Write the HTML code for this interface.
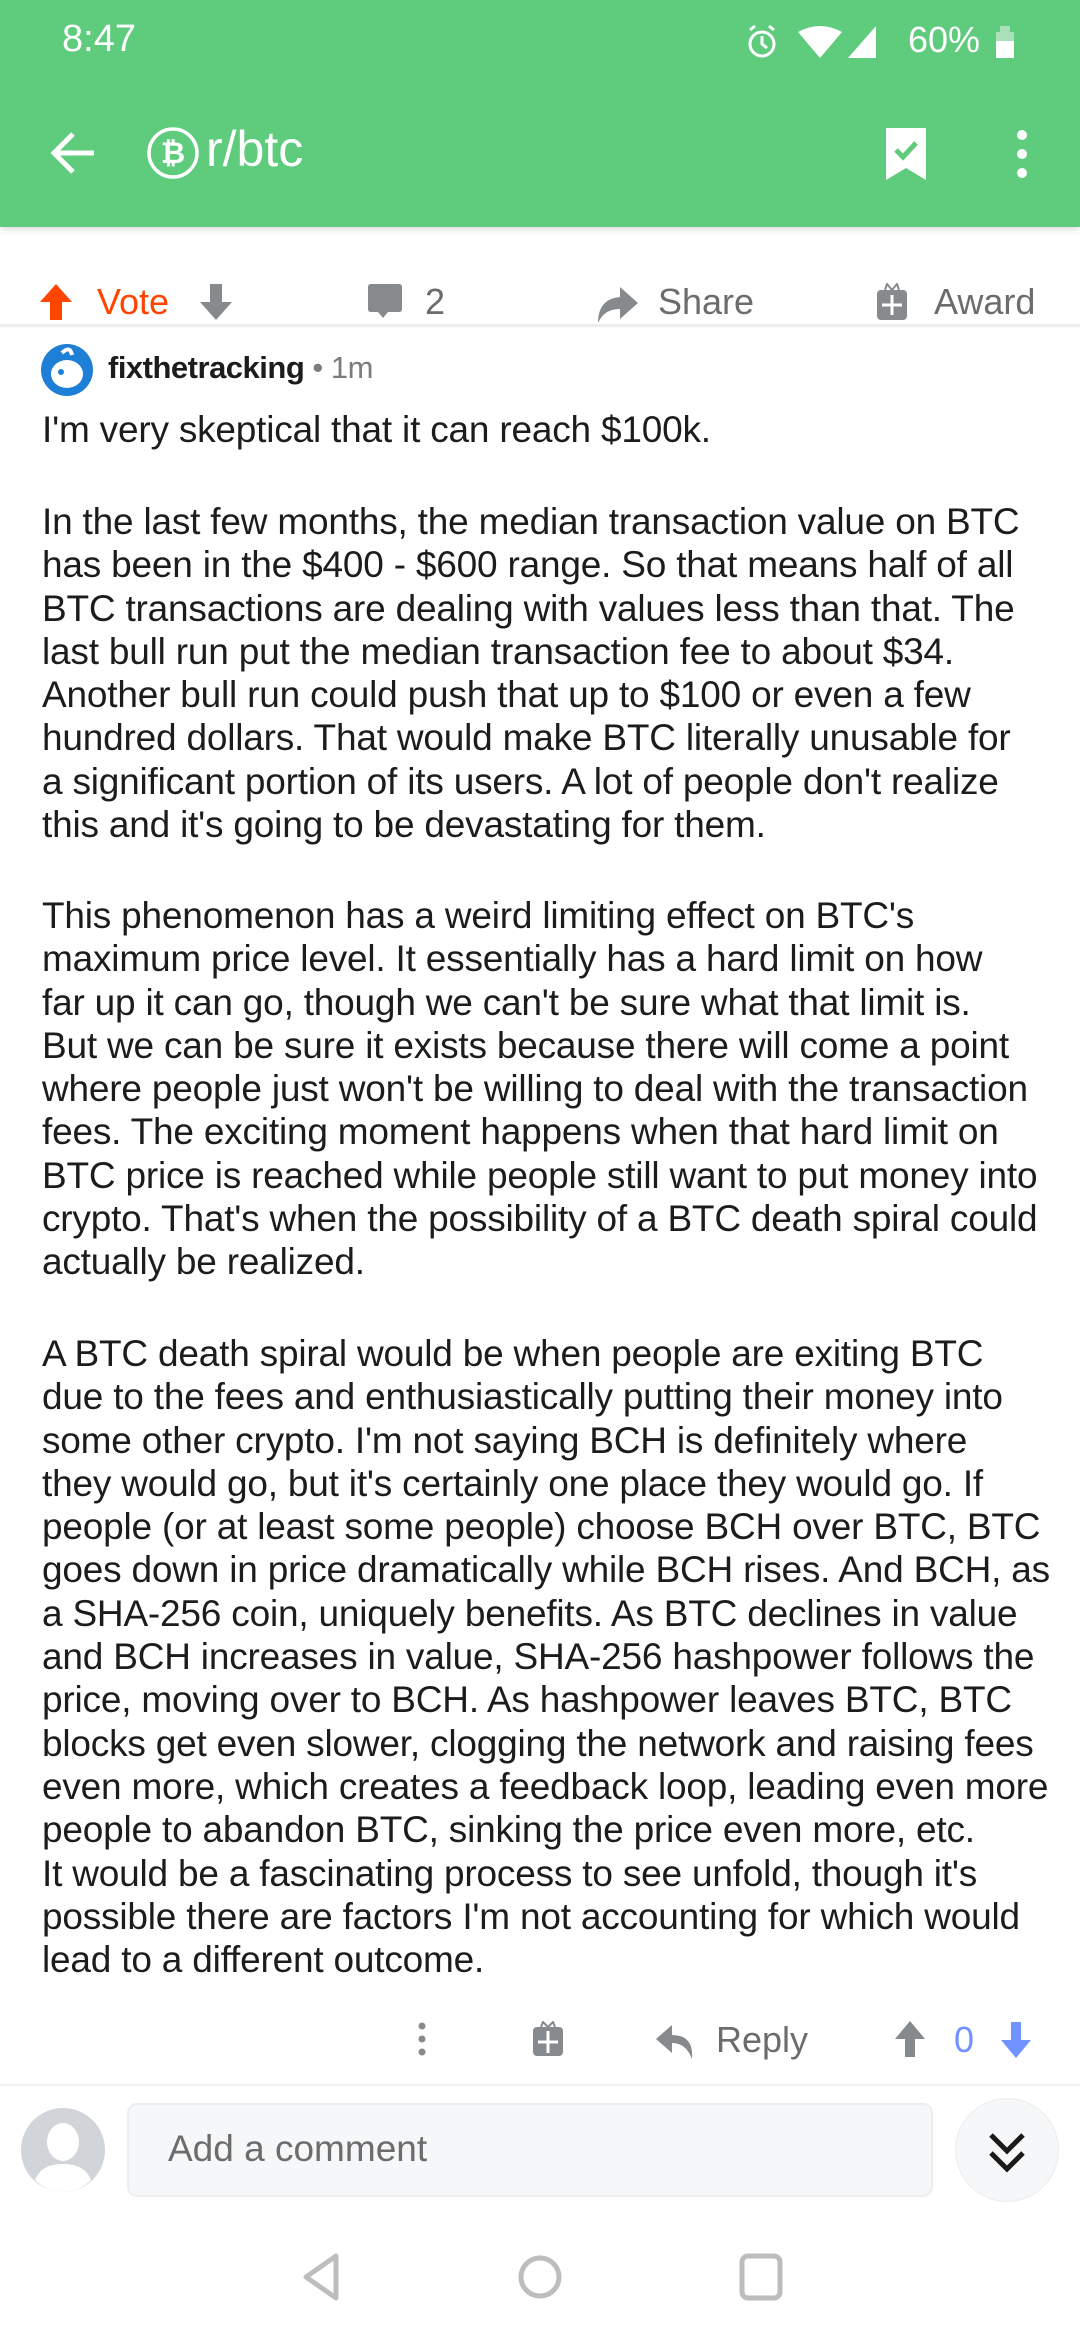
<!DOCTYPE html>
<html><head><meta charset="utf-8"><style>
*{margin:0;padding:0;box-sizing:border-box}
body{width:1080px;height:2340px;position:relative;background:#fff;font-family:"Liberation Sans",sans-serif;overflow:hidden}
.a{position:absolute;white-space:nowrap}
.hdr{position:absolute;left:0;top:0;width:1080px;height:227px;background:#5fcb7c;box-shadow:0 3px 6px rgba(0,0,0,.12)}
.body{position:absolute;left:42px;color:#1c1c1c;font-size:37px;letter-spacing:-0.2px;line-height:43.3px;white-space:nowrap}
</style></head><body>
<div class="hdr"></div>
<div class="a" style="left:62px;top:18px;font-size:38px;color:#fff">8:47</div>
<svg class="a" style="left:744px;top:22px" width="280" height="40" viewBox="0 0 280 40">
<circle cx="18" cy="22" r="12" fill="none" stroke="#fff" stroke-width="3"/><path d="M18 14v8l5 4" stroke="#fff" stroke-width="3" fill="none"/><path d="M6 8l5-4M30 8l-5-4" stroke="#fff" stroke-width="3"/>
<path d="M54 10q22-12 44 0l-22 26z" fill="#fff"/>
<path d="M104 36l28-32v32z" fill="#fff"/>
<rect x="252" y="10" width="18" height="26" fill="#fff"/><rect x="256" y="4" width="10" height="6" fill="#a8e0b8"/><rect x="252" y="10" width="18" height="9" fill="#a8e0b8"/>
</svg>
<div class="a" style="left:908px;top:19px;font-size:36px;color:#fff">60%</div>
<svg class="a" style="left:48px;top:128px" width="52" height="50" viewBox="0 0 52 50"><path d="M46 25H8M25 6L6 25l19 19" stroke="#fff" stroke-width="5" fill="none"/></svg>
<svg class="a" style="left:145px;top:125px" width="56" height="56" viewBox="0 0 56 56"><circle cx="28" cy="28" r="24" fill="none" stroke="#fff" stroke-width="3.5"/><text x="28" y="38" font-size="30" font-weight="bold" fill="#fff" text-anchor="middle" font-family="Liberation Sans">₿</text></svg>
<div class="a" style="left:206px;top:120px;font-size:50px;color:#fff">r/btc</div>
<svg class="a" style="left:882px;top:126px" width="52" height="56" viewBox="0 0 52 56"><path d="M4 2h40v52l-20-12-20 12z" fill="#fff"/><path d="M14 24l7 7 13-14" stroke="#5fcb7c" stroke-width="5" fill="none"/></svg>
<svg class="a" style="left:1012px;top:128px" width="20" height="52" viewBox="0 0 20 52"><circle cx="10" cy="7" r="5" fill="#fff"/><circle cx="10" cy="26" r="5" fill="#fff"/><circle cx="10" cy="45" r="5" fill="#fff"/></svg>

<!-- action bar -->
<svg class="a" style="left:38px;top:284px" width="36" height="36" viewBox="0 0 36 36"><path d="M18 0L2 18h10v18h12V18h10z" fill="#ff4500"/></svg>
<div class="a" style="left:97px;top:281px;font-size:36px;color:#ff4500">Vote</div>
<svg class="a" style="left:198px;top:284px" width="36" height="36" viewBox="0 0 36 36"><path d="M18 36L2 18h10V0h12v18h10z" fill="#878a8c"/></svg>
<svg class="a" style="left:366px;top:284px" width="38" height="36" viewBox="0 0 38 36"><path d="M2 3q0-3 3-3h28q3 0 3 3v22q0 3-3 3H22l-5 6-5-6H5q-3 0-3-3z" fill="#878a8c"/></svg>
<div class="a" style="left:425px;top:281px;font-size:36px;color:#6a6c6e">2</div>
<svg class="a" style="left:596px;top:281px" width="44" height="42" viewBox="0 0 44 42"><path d="M2 42q0-24 22-26V6l18 16-18 16V28Q8 28 2 42z" fill="#878a8c"/></svg>
<div class="a" style="left:658px;top:281px;font-size:36px;color:#6a6c6e">Share</div>
<svg class="a" style="left:876px;top:283px" width="32" height="38" viewBox="0 0 32 38"><rect x="1" y="7" width="30" height="30" rx="4" fill="#878a8c"/><path d="M16 12v20M6 22h20" stroke="#fff" stroke-width="3"/><path d="M9 7l2-6 5 6 5-6 2 6" stroke="#878a8c" stroke-width="2" fill="none"/></svg>
<div class="a" style="left:934px;top:281px;font-size:36px;color:#6a6c6e">Award</div>
<div class="a" style="left:0;top:324px;width:1080px;height:3px;background:#ededed"></div>

<!-- user -->
<svg class="a" style="left:40px;top:343px" width="54" height="54" viewBox="0 0 54 54"><circle cx="27" cy="27" r="26" fill="#1e7fd6"/><ellipse cx="27" cy="31" rx="16" ry="14" fill="#fff"/><circle cx="21" cy="29" r="3" fill="#1e7fd6"/><path d="M22 10q8-8 10 2" stroke="#fff" stroke-width="4" fill="none"/></svg>
<div class="a" style="left:108px;top:350px;font-size:31px;font-weight:bold;color:#1c1c1c;letter-spacing:-0.5px">fixthetracking <span style="font-weight:normal;color:#7c7c7c">• 1m</span></div>

<div class="body" style="top:408px">I'm very skeptical that it can reach $100k.</div>
<div class="body" style="top:500px">In the last few months, the median transaction value on BTC<br>has been in the $400 - $600 range. So that means half of all<br>BTC transactions are dealing with values less than that. The<br>last bull run put the median transaction fee to about $34.<br>Another bull run could push that up to $100 or even a few<br>hundred dollars. That would make BTC literally unusable for<br>a significant portion of its users. A lot of people don't realize<br>this and it's going to be devastating for them.</div>
<div class="body" style="top:894px">This phenomenon has a weird limiting effect on BTC's<br>maximum price level. It essentially has a hard limit on how<br>far up it can go, though we can't be sure what that limit is.<br>But we can be sure it exists because there will come a point<br>where people just won't be willing to deal with the transaction<br>fees. The exciting moment happens when that hard limit on<br>BTC price is reached while people still want to put money into<br>crypto. That's when the possibility of a BTC death spiral could<br>actually be realized.</div>
<div class="body" style="top:1332px">A BTC death spiral would be when people are exiting BTC<br>due to the fees and enthusiastically putting their money into<br>some other crypto. I'm not saying BCH is definitely where<br>they would go, but it's certainly one place they would go. If<br>people (or at least some people) choose BCH over BTC, BTC<br>goes down in price dramatically while BCH rises. And BCH, as<br>a SHA-256 coin, uniquely benefits. As BTC declines in value<br>and BCH increases in value, SHA-256 hashpower follows the<br>price, moving over to BCH. As hashpower leaves BTC, BTC<br>blocks get even slower, clogging the network and raising fees<br>even more, which creates a feedback loop, leading even more<br>people to abandon BTC, sinking the price even more, etc.<br>It would be a fascinating process to see unfold, though it's<br>possible there are factors I'm not accounting for which would<br>lead to a different outcome.</div>

<!-- comment actions -->
<svg class="a" style="left:414px;top:2022px" width="16" height="34" viewBox="0 0 16 34"><circle cx="8" cy="4" r="3.5" fill="#878a8c"/><circle cx="8" cy="17" r="3.5" fill="#878a8c"/><circle cx="8" cy="30" r="3.5" fill="#878a8c"/></svg>
<svg class="a" style="left:532px;top:2021px" width="32" height="36" viewBox="0 0 32 36"><rect x="1" y="6" width="30" height="29" rx="4" fill="#878a8c"/><path d="M16 10v22M6 21h20" stroke="#fff" stroke-width="3"/><path d="M9 6l2-5 5 5 5-5 2 5" stroke="#878a8c" stroke-width="2" fill="none"/></svg>
<svg class="a" style="left:654px;top:2021px" width="40" height="38" viewBox="0 0 40 38"><path d="M38 38q2-24-20-24V4L2 18l16 14V22q14 0 20 16z" fill="#878a8c"/></svg>
<div class="a" style="left:716px;top:2019px;font-size:36px;color:#6a6c6e">Reply</div>
<svg class="a" style="left:893px;top:2021px" width="34" height="36" viewBox="0 0 34 36"><path d="M17 0L2 18h10v18h10V18h10z" fill="#878a8c"/></svg>
<div class="a" style="left:954px;top:2019px;font-size:36px;color:#7193ff">0</div>
<svg class="a" style="left:999px;top:2022px" width="34" height="36" viewBox="0 0 34 36"><path d="M17 36L2 18h10V0h10v18h10z" fill="#7193ff"/></svg>
<div class="a" style="left:0;top:2084px;width:1080px;height:2px;background:#f0f0f0"></div>

<!-- comment box -->
<svg class="a" style="left:21px;top:2108px" width="84" height="84" viewBox="0 0 84 84"><circle cx="42" cy="42" r="42" fill="#d1d4d8"/><ellipse cx="42" cy="34" rx="16" ry="19" fill="#fff"/><path d="M14 72q6-16 28-16t28 16q-12 12-28 12T14 72z" fill="#fff"/></svg>
<div class="a" style="left:127px;top:2103px;width:806px;height:94px;background:#f6f7f8;border:2px solid #edeef0;border-radius:10px"></div>
<div class="a" style="left:168px;top:2128px;font-size:37px;color:#6c6c6c">Add a comment</div>
<div class="a" style="left:955px;top:2098px;width:104px;height:104px;border-radius:52px;background:#f6f7f8;border:1px solid #ececec"></div>
<svg class="a" style="left:987px;top:2131px" width="40" height="42" viewBox="0 0 40 42"><path d="M4 4l16 16 16-16M4 22l16 16 16-16" stroke="#1a1a1b" stroke-width="5" fill="none"/></svg>

<!-- nav -->
<svg class="a" style="left:296px;top:2252px" width="54" height="50" viewBox="0 0 54 50"><path d="M40 4L10 25l30 21z" stroke="#bdbdbd" stroke-width="5" fill="none" stroke-linejoin="round"/></svg>
<svg class="a" style="left:514px;top:2252px" width="52" height="50" viewBox="0 0 52 50"><circle cx="26" cy="25" r="19" stroke="#bdbdbd" stroke-width="5" fill="none"/></svg>
<svg class="a" style="left:736px;top:2252px" width="50" height="50" viewBox="0 0 50 50"><rect x="6" y="4" width="38" height="42" rx="6" stroke="#bdbdbd" stroke-width="5" fill="none"/></svg>
</body></html>
